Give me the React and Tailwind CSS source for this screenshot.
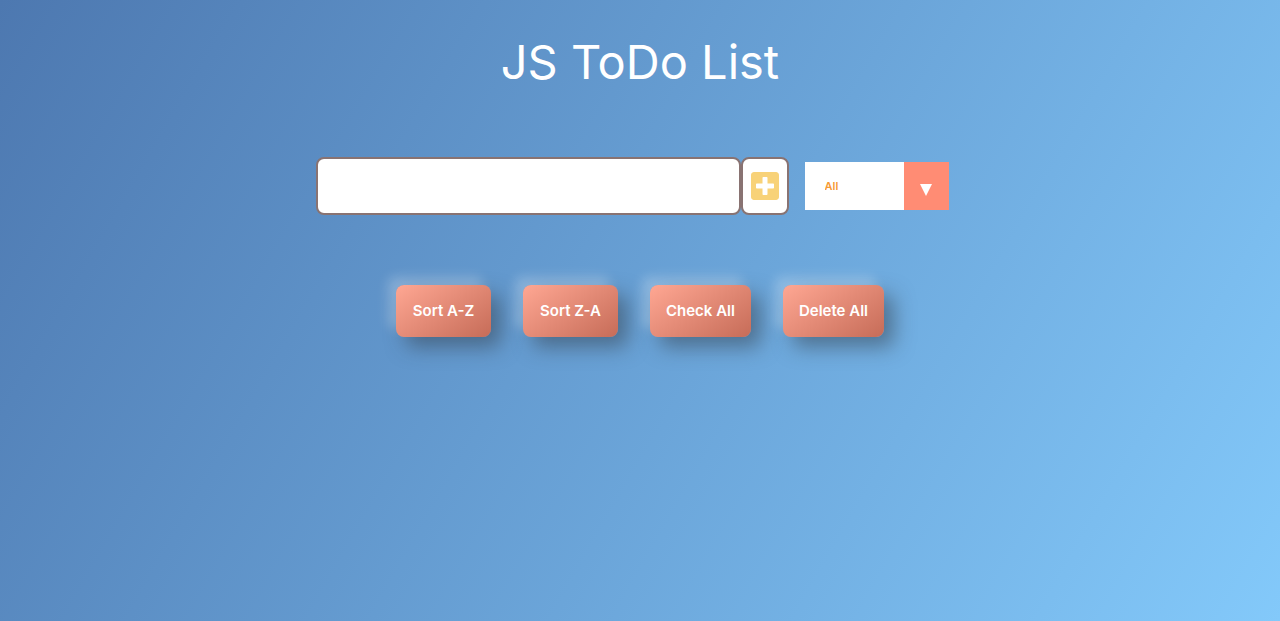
import { useState } from "react";

const actions = ["Sort A-Z", "Sort Z-A", "Check All", "Delete All"];

export default function App() {
  const [text, setText] = useState("");
  const [filter, setFilter] = useState("all");

  return (
    <div className="min-h-screen bg-[linear-gradient(120deg,#4d78b0,#83c9fa)] font-['Inter',sans-serif] text-white">
      <header className="flex items-center justify-center pt-6">
        <h1 className="text-[47px] leading-[75px] font-normal">JS ToDo List</h1>
      </header>

      <form
        className="mt-[58px] flex items-center justify-center"
        onSubmit={(event) => event.preventDefault()}
      >
        <input
          type="text"
          aria-label="New todo"
          value={text}
          onChange={(event) => setText(event.target.value)}
          className="h-[58px] w-[425px] rounded-lg border-2 border-[#897372] bg-white px-4 text-2xl text-[#ff8c74] outline-none"
        />
        <button
          type="submit"
          aria-label="Add todo"
          className="flex h-[58px] w-12 items-center justify-center rounded-lg border-2 border-[#897372] bg-white text-[#f8d278]"
        >
          <svg viewBox="0 0 448 512" className="h-8 w-7" fill="currentColor" aria-hidden="true">
            <path d="M400 32H48C21.500 32 0 53.500 0 80v352c0 26.500 21.500 48 48 48h352c26.500 0 48-21.500 48-48V80c0-26.500-21.500-48-48-48zm-32 252c0 6.600-5.400 12-12 12h-92v92c0 6.600-5.400 12-12 12h-56c-6.600 0-12-5.400-12-12v-92H92c-6.600 0-12-5.400-12-12v-56c0-6.600 5.400-12 12-12h92v-92c0-6.600 5.400-12 12-12h56c6.600 0 12 5.400 12 12v92h92c6.600 0 12 5.400 12 12v56z" />
          </svg>
        </button>
        <div className="relative mx-4 h-12 w-36">
          <select
            aria-label="Filter todos"
            value={filter}
            onChange={(event) => setFilter(event.target.value)}
            className="h-full w-full cursor-pointer appearance-none bg-white pr-12 pl-5 text-[11px] font-semibold text-[#f79a35] outline-none"
          >
            <option value="all">All</option>
            <option value="completed">Completed</option>
            <option value="uncompleted">Uncompleted</option>
          </select>
          <span
            aria-hidden="true"
            className="pointer-events-none absolute inset-y-0 right-0 flex w-[45px] items-center justify-center bg-[#ff8c74] pt-2"
          >
            <svg viewBox="0 0 12 12" className="size-3" fill="currentColor">
              <path d="M0 0h12L6 12z" />
            </svg>
          </span>
        </div>
      </form>

      <div className="mt-[70px] flex flex-wrap justify-center gap-8">
        {actions.map((label) => (
          <button
            key={label}
            type="button"
            className="h-[52px] min-w-[95px] rounded-lg bg-[linear-gradient(145deg,#ffa793,#c66c58)] px-4 text-[15px] font-semibold shadow-[10px_10px_20px_rgba(50,60,70,0.5),-8px_-8px_12px_rgba(255,255,255,0.25)]"
          >
            {label}
          </button>
        ))}
      </div>
    </div>
  );
}
